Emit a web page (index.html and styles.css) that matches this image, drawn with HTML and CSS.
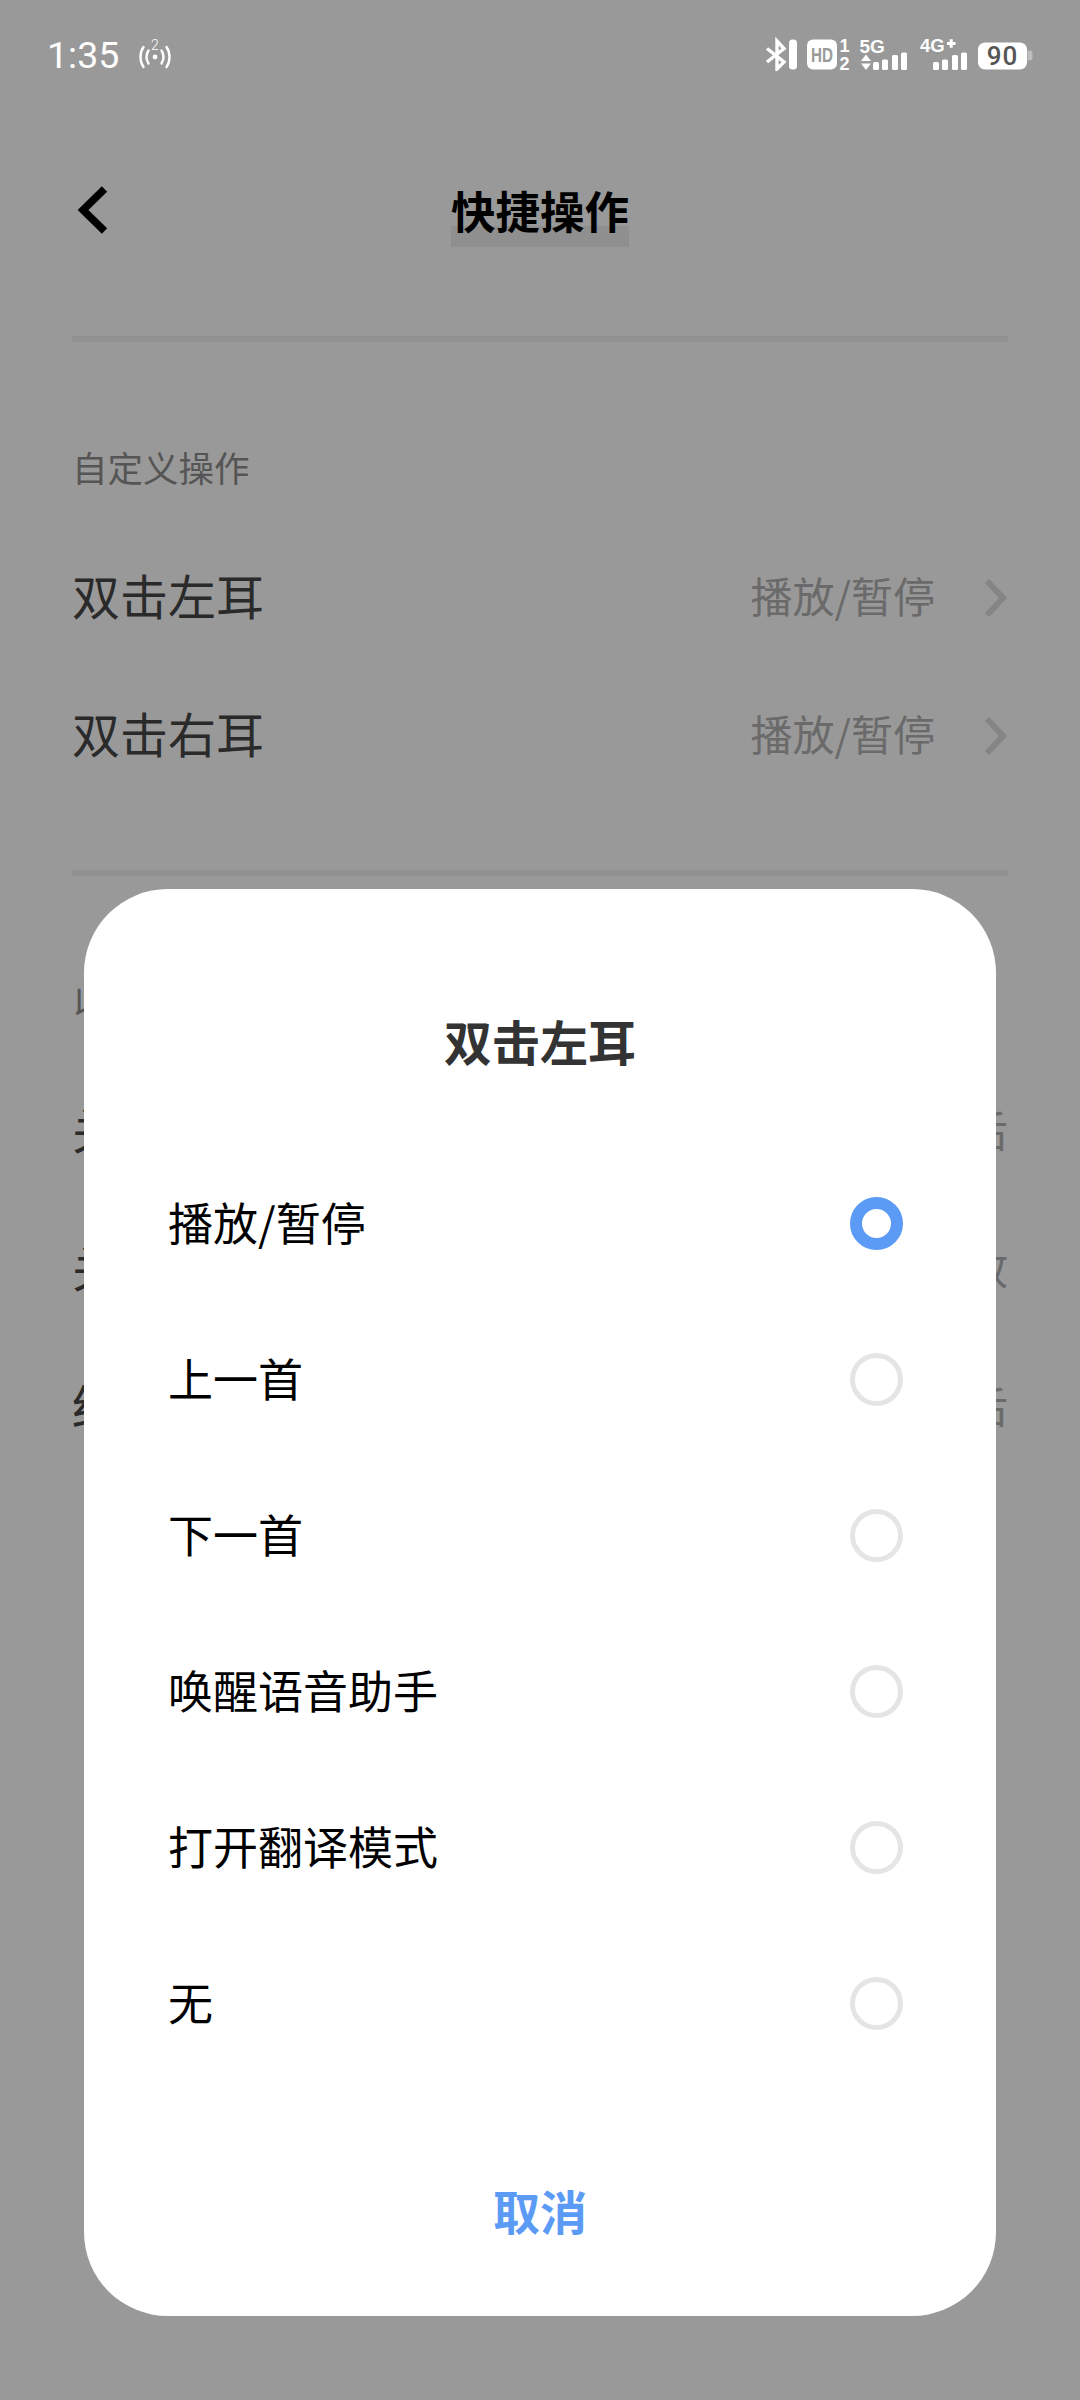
FILE: index.html
```html
<!DOCTYPE html>
<html lang="zh-CN">
<head>
<meta charset="utf-8">
<title>快捷操作</title>
<link rel="stylesheet" href="styles.css">
</head>
<body>
<div class="page">
  <header class="status">
    <div class="status-left">
      <span class="time">1:35</span>
      <svg class="hotspot" viewBox="0 -8 34 40" width="34" height="40">
        <text x="16" y="11" class="hot-num">2</text>
        <circle cx="16" cy="18" r="2.4" fill="#fff"/>
        <path d="M4.5 8C0.5 13.5 0.5 22.5 4.5 28M9.5 11.5C7 15.5 7 20.5 9.5 24.5M27.5 8C31.5 13.5 31.5 22.5 27.5 28M22.5 11.5C25 15.5 25 20.5 22.5 24.5" fill="none" stroke="#fff" stroke-width="2.4" stroke-linecap="round"/>
      </svg>
    </div>
    <div class="status-right">
      <svg class="ic-bt" viewBox="0 -8 34 40" width="34" height="40">
        <path d="M3 9.5L20 23L13 30V2L20 9.5L3 23" fill="none" stroke="#fff" stroke-width="3.4"/>
        <rect x="25" y="0.5" width="8" height="30" rx="3.5" fill="#fff"/>
      </svg>
      <svg class="ic-hd" viewBox="0 -8 44 50" width="44" height="50">
        <rect x="1" y="0.5" width="30" height="30" rx="6" fill="#fff"/>
        <text x="16" y="22.5" class="hd-txt" textLength="22" lengthAdjust="spacingAndGlyphs">HD</text>
        <text x="38.5" y="13" class="sim-num">1</text>
        <text x="38.5" y="30.5" class="sim-num">2</text>
      </svg>
      <svg class="ic-5g" viewBox="0 -8 50 40" width="50" height="40">
        <text x="0.5" y="14" class="net-txt">5G</text>
        <path d="M7 15.5L12 22H2ZM2 24.5H12L7 31Z" fill="#fff"/>
        <rect x="14" y="23" width="6" height="8" rx="1.5" fill="#fff"/>
        <rect x="23" y="20.5" width="6" height="10.5" rx="1.5" fill="#fff"/>
        <rect x="33" y="16" width="6" height="15" rx="1.5" fill="#fff"/>
        <rect x="42" y="13.5" width="6" height="17.5" rx="1.5" fill="#fff"/>
      </svg>
      <svg class="ic-4g" viewBox="0 -8 50 40" width="50" height="40">
        <text x="0" y="13" class="net-txt net-4g">4G</text>
        <path d="M27 4.5H35.5M31.2 0.2V8.8" fill="none" stroke="#fff" stroke-width="3"/>
        <rect x="13" y="23" width="6" height="8" rx="1.5" fill="#fff"/>
        <rect x="22" y="20.5" width="6" height="10.5" rx="1.5" fill="#fff"/>
        <rect x="32" y="16" width="6" height="15" rx="1.5" fill="#fff"/>
        <rect x="41" y="13.5" width="6" height="17.5" rx="1.5" fill="#fff"/>
      </svg>
      <svg class="ic-batt" viewBox="0 -8 56 40" width="56" height="40">
        <rect x="1" y="3.5" width="49" height="27" rx="7" fill="#fff"/>
        <path d="M50.5 11.5H52.5Q55.5 11.5 55.5 14.5V18.5Q55.5 21.5 52.5 21.5H50.5Z" fill="#bdbdbd"/>
        <text x="25.5" y="26" class="batt-txt">90</text>
      </svg>
    </div>
  </header>

  <nav class="nav">
    <svg class="back" viewBox="0 0 34 48" width="34" height="48">
      <path d="M28.5 3L7 24L28.5 45" fill="none" stroke="#000" stroke-width="7.5"/>
    </svg>
    <h1 class="title">快捷操作</h1>
  </nav>

  <section class="section">
    <p class="label">自定义操作</p>
    <div class="row">
      <span class="row-name">双击左耳</span>
      <span class="row-end">
        <span class="row-val">播放/暂停</span>
        <svg class="more" viewBox="0 0 24 40" width="24" height="40"><path d="M3 3L19 20L3 37" fill="none" stroke="#858585" stroke-width="6"/></svg>
      </span>
    </div>
    <div class="row">
      <span class="row-name">双击右耳</span>
      <span class="row-end">
        <span class="row-val">播放/暂停</span>
        <svg class="more" viewBox="0 0 24 40" width="24" height="40"><path d="M3 3L19 20L3 37" fill="none" stroke="#858585" stroke-width="6"/></svg>
      </span>
    </div>
  </section>

  <section class="section">
    <p class="label">以</p>
    <div class="row"><span class="row-name">关</span><span class="row-val">后</span></div>
    <div class="row"><span class="row-name">关</span><span class="row-val">放</span></div>
    <div class="row"><span class="row-name">结</span><span class="row-val">后</span></div>
  </section>

  <div class="sheet">
    <h2 class="sheet-title">双击左耳</h2>
    <ul class="options">
      <li class="option"><span class="option-text">播放/暂停</span><i class="radio radio-on"></i></li>
      <li class="option"><span class="option-text">上一首</span><i class="radio"></i></li>
      <li class="option"><span class="option-text">下一首</span><i class="radio"></i></li>
      <li class="option"><span class="option-text">唤醒语音助手</span><i class="radio"></i></li>
      <li class="option"><span class="option-text">打开翻译模式</span><i class="radio"></i></li>
      <li class="option"><span class="option-text">无</span><i class="radio"></i></li>
    </ul>
    <div class="cancel">取消</div>
  </div>
</div>
</body>
</html>
```
FILE: styles.css
```css
* { box-sizing: border-box; }
html, body { margin: 0; padding: 0; }
body {
  font-family: "Noto Sans CJK SC", "Noto Sans", sans-serif;
  background: #999;
}
.page {
  position: relative;
  width: 1080px;
  height: 2400px;
  overflow: hidden;
  background: #999;
}

/* status bar */
.status {
  height: 110px;
  padding: 31px 47px 29px 47px;
  display: flex;
  justify-content: space-between;
  align-items: flex-start;
}
.status-left { display: flex; align-items: flex-start; }
.time {
  font-family: Roboto, sans-serif;
  font-size: 37.5px;
  line-height: 48px;
  font-weight: 400;
  color: #fff;
  width: 92px;
}
.hotspot { display: block; }
.hot-num { font-family: Roboto, sans-serif; font-size: 14px; font-weight: 300; fill: #fff; text-anchor: middle; }
.status-right { display: flex; align-items: flex-start; }
.status-right svg { display: block; }
.ic-bt { margin-right: 8px; }
.ic-hd { margin-right: 9px; }
.ic-5g { margin-right: 11px; }
.ic-4g { margin-right: 7px; }
.hd-txt { font-family: "Liberation Sans", sans-serif; font-size: 20px; font-weight: 700; fill: #999; text-anchor: middle; }
.sim-num { font-family: "Liberation Sans", sans-serif; font-size: 18px; font-weight: 700; fill: #fff; text-anchor: middle; }
.net-txt { font-family: "Liberation Sans", sans-serif; font-size: 19px; font-weight: 700; fill: #fff; }
.net-4g { font-size: 18.5px; }
.batt-txt { font-family: Roboto, sans-serif; font-size: 26px; font-weight: 500; fill: #555; text-anchor: middle; letter-spacing: 1px; }

/* nav */
.nav {
  position: relative;
  margin: 0 72px;
  padding-top: 64px;
  border-bottom: 6px solid #919191;
  box-sizing: content-box;
  height: 162px;
  display: flex;
  justify-content: center;
  align-items: flex-start;
}
.back { position: absolute; left: 4px; top: 76px; display: block; }
.title {
  margin: 0;
  font-size: 44.5px;
  line-height: 72px;
  font-weight: 700;
  color: #000;
  background: linear-gradient(to bottom, transparent 52px, #8f8f8f 52px);
  height: 73px;
}

/* sections */
.section {
  margin: 0 72px;
  padding: 100px 0 65px;
  border-bottom: 6px solid #919191;
}
.section:last-of-type { border-bottom: 0; }
.label {
  margin: 0 0 37px;
  font-size: 35.5px;
  line-height: 50px;
  color: #555;
}
.row {
  height: 138px;
  display: flex;
  align-items: center;
  justify-content: space-between;
}
.row-name { font-size: 48px; color: #2a2a2a; padding-bottom: 8px; }
.row-end { display: flex; align-items: center; }
.row-val { font-size: 42px; color: #6a6a6a; padding-bottom: 8px; }
.more { display: block; margin-left: 49px; }

/* dialog */
.sheet {
  position: absolute;
  left: 84px;
  top: 889px;
  width: 912px;
  height: 1427px;
  padding: 116px 93px 68px 84px;
  background: #fff;
  border-radius: 84px;
}
.sheet-title {
  margin: 0 -9px 70px 0;
  font-size: 48px;
  line-height: 70px;
  font-weight: 700;
  color: #333;
  text-align: center;
}
.options { margin: 0 0 94px; padding: 0; list-style: none; }
.option {
  height: 156px;
  display: flex;
  align-items: center;
  justify-content: space-between;
  font-size: 45px;
  color: #000;
}
.option-text { padding-bottom: 3px; }
.radio {
  display: block;
  width: 53px;
  height: 53px;
  border-radius: 50%;
  border: 5px solid #e5e5e5;
}
.radio-on { border: 12px solid #5b9bf6; }
.cancel {
  margin-right: -9px;
  font-size: 47px;
  line-height: 70px;
  font-weight: 700;
  color: #5b9bf6;
  text-align: center;
}
```
